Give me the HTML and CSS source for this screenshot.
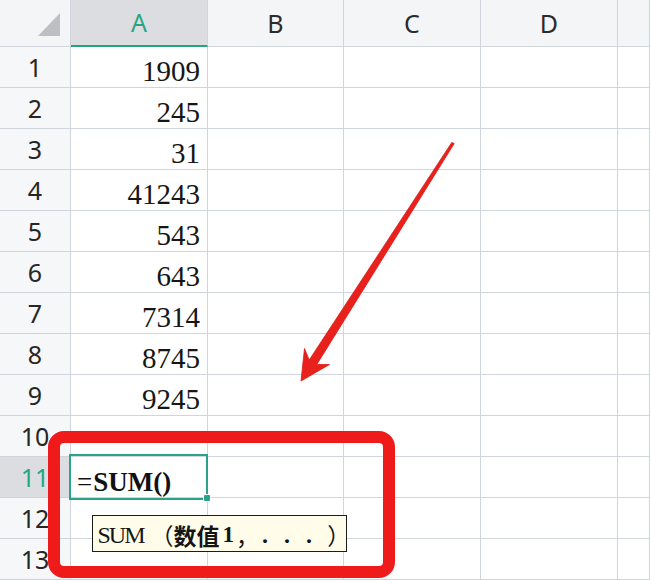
FILE: index.html
```html
<!DOCTYPE html>
<html lang="zh">
<head>
<meta charset="utf-8">
<title>SUM</title>
<link rel="stylesheet" href="styles.css">
</head>
<body>
<div class="sheet">
  <div class="corner"><svg class="tri" width="70" height="46" viewBox="0 0 70 46"><polygon points="38,36 60,36 60,13" fill="#bdbfc3"/></svg></div>
  <div class="ch sel">A</div><div class="ch">B</div><div class="ch">C</div><div class="ch">D</div><div class="ch"></div>

  <div class="rh">1</div><div class="c num">1909</div><div class="c"></div><div class="c"></div><div class="c"></div><div class="c"></div>
  <div class="rh">2</div><div class="c num">245</div><div class="c"></div><div class="c"></div><div class="c"></div><div class="c"></div>
  <div class="rh">3</div><div class="c num">31</div><div class="c"></div><div class="c"></div><div class="c"></div><div class="c"></div>
  <div class="rh">4</div><div class="c num">41243</div><div class="c"></div><div class="c"></div><div class="c"></div><div class="c"></div>
  <div class="rh">5</div><div class="c num">543</div><div class="c"></div><div class="c"></div><div class="c"></div><div class="c"></div>
  <div class="rh">6</div><div class="c num">643</div><div class="c"></div><div class="c"></div><div class="c"></div><div class="c"></div>
  <div class="rh">7</div><div class="c num">7314</div><div class="c"></div><div class="c"></div><div class="c"></div><div class="c"></div>
  <div class="rh">8</div><div class="c num">8745</div><div class="c"></div><div class="c"></div><div class="c"></div><div class="c"></div>
  <div class="rh">9</div><div class="c num">9245</div><div class="c"></div><div class="c"></div><div class="c"></div><div class="c"></div>
  <div class="rh">10</div><div class="c"></div><div class="c"></div><div class="c"></div><div class="c"></div><div class="c"></div>
  <div class="rh sel">11</div><div class="c active"><span class="eq">=</span><b>SUM()</b></div><div class="c"></div><div class="c"></div><div class="c"></div><div class="c"></div>
  <div class="rh">12</div><div class="c"></div><div class="c"></div><div class="c"></div><div class="c"></div><div class="c"></div>
  <div class="rh">13</div><div class="c"></div><div class="c"></div><div class="c"></div><div class="c"></div><div class="c"></div>
</div>

<div class="tooltip"><span class="tt-fn">SUM</span><span class="tt-cjk tt-open">（</span><b class="tt-cjk">数值</b><span class="tt-one">1</span><span class="tt-cjk tt-comma">，</span><span class="tt-dots">...</span><span class="tt-cjk tt-close">）</span></div>

<div class="highlight"></div>

<svg class="arrow" width="650" height="580" viewBox="0 0 650 580">
  <polygon points="454.2,143.6 316.8,364.4 329.5,364.5 301,381 304.5,348.5 309.2,360 451.8,142.4" fill="#e8211c" stroke="#d91a16" stroke-width="0.8" stroke-linejoin="round"/>
</svg>
</body>
</html>
```

FILE: styles.css
```css
html, body {
  margin: 0;
  padding: 0;
}

body {
  width: 650px;
  height: 580px;
  overflow: hidden;
  position: relative;
  background: #ffffff;
  font-family: "Noto Sans", "Liberation Sans", sans-serif;
}

.sheet {
  display: grid;
  grid-template-columns: 71px 137px 136px 137px 137px 32px;
  grid-template-rows: 47px repeat(13, 41px);
}

.sheet > div {
  box-sizing: border-box;
  border-right: 1px solid #d0d4db;
  border-bottom: 1px solid #d0d4db;
  min-width: 0;
}

.corner {
  background: #f4f5f7;
}

.tri {
  display: block;
}

.ch {
  background: #f4f5f7;
  text-align: center;
  font-size: 25px;
  line-height: 46px;
  color: #2b2b2b;
}

.ch.sel {
  background: #dcdde0;
  color: #27a582;
  border-bottom: 2px solid #26a37f;
  line-height: 45px;
}

.rh {
  background: #f6f7f9;
  text-align: center;
  font-size: 25px;
  line-height: 39px;
  padding-top: 1px;
  color: #262626;
}

.rh.sel {
  background: #dcdde0;
  color: #27a582;
}

.c {
  background: #ffffff;
}

.num {
  display: flex;
  justify-content: flex-end;
  align-items: flex-end;
  padding: 0 7px 1px 0;
  font-family: "Liberation Serif", serif;
  font-size: 29px;
  line-height: 1;
  color: #161616;
}

.active {
  position: relative;
  display: flex;
  align-items: flex-end;
  padding: 0 0 1px 6px;
  font-family: "Liberation Serif", serif;
  font-size: 27px;
  line-height: 1;
  color: #111111;
}

.active .eq {
  font-weight: normal;
  margin-right: 1px;
}

.active::after {
  content: "";
  position: absolute;
  left: -2px;
  top: -3px;
  right: -1px;
  bottom: -3px;
  border: 2px solid #2ba38a;
}

.active::before {
  content: "";
  position: absolute;
  right: -4px;
  bottom: -5px;
  width: 6px;
  height: 6px;
  border-radius: 2px;
  background: #2ba38a;
  border: 1px solid #ffffff;
  z-index: 1;
}

.tooltip {
  position: absolute;
  left: 92px;
  top: 515px;
  width: 255px;
  height: 37px;
  box-sizing: border-box;
  border: 1.5px solid #1c1c1c;
  background: #fffdea;
  display: flex;
  align-items: center;
  padding: 3px 0 0 4.5px;
  white-space: nowrap;
  color: #151515;
}

.tt-fn {
  font-family: "Liberation Serif", serif;
  font-size: 24px;
  letter-spacing: -2px;
}

.tt-cjk {
  font-family: "Noto Sans CJK SC", sans-serif;
  font-size: 23px;
  line-height: 1;
}

.tt-open {
  margin-left: 7px;
}

b.tt-cjk {
  font-weight: 700;
}

.tt-one {
  font-family: "Liberation Serif", serif;
  font-size: 23px;
  font-weight: 700;
  margin-left: 3px;
}

.tt-comma {
  margin-left: 2px;
}

.tt-dots {
  font-family: "Liberation Serif", serif;
  font-size: 24px;
  font-weight: 700;
  letter-spacing: 16px;
  margin-left: 3px;
}

.tt-close {
  font-feature-settings: "palt";
}

.highlight {
  position: absolute;
  left: 48px;
  top: 431px;
  width: 347px;
  height: 147px;
  box-sizing: border-box;
  border: 12px solid #ef1a1a;
  border-radius: 16px;
}

.arrow {
  position: absolute;
  left: 0;
  top: 0;
}
```
